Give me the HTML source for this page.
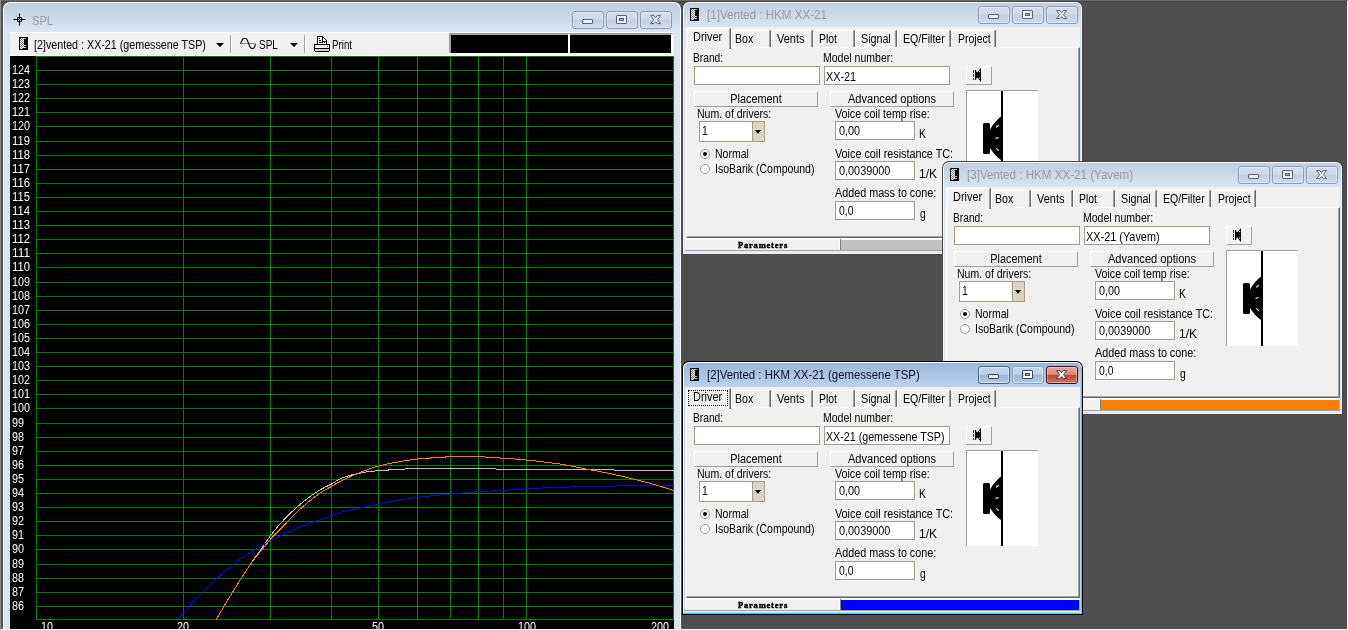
<!DOCTYPE html><html><head><meta charset="utf-8"><title>SPL</title><style>
html,body{margin:0;padding:0}
body{width:1348px;height:630px;background:#4f4f4f;overflow:hidden;position:relative;font-family:"Liberation Sans",sans-serif}
.t{position:absolute;white-space:nowrap;line-height:14px;transform-origin:0 0;display:block}
.t.c{text-align:center;transform-origin:50% 0}
.tt{position:absolute;white-space:nowrap;font-size:12.5px;line-height:14px;transform-origin:0 0;display:block}
.pm{position:absolute;font-family:"Liberation Serif","DejaVu Serif",serif;font-weight:bold;font-size:8.5px;line-height:11px;text-align:center;display:block;letter-spacing:.8px;-webkit-text-stroke:.45px #000}
svg text{font-family:"Liberation Sans",sans-serif}
</style></head><body><div style="position:absolute;left:0;top:0;width:1348px;height:630px;will-change:transform">
<div style="position:absolute;left:0px;top:0px;width:1348px;height:1px;background:#696969"></div>
<div style="position:absolute;left:0px;top:1px;width:1348px;height:1px;background:#474747"></div>
<div style="position:absolute;left:1346px;top:1px;width:1px;height:628px;background:#474747"></div>
<div style="position:absolute;left:0px;top:0px;width:1px;height:630px;background:#8c8c8c"></div>
<div style="position:absolute;left:2px;top:1px;width:680px;height:640px;background:#555;border-radius:8px 8px 0 0;overflow:hidden">
<div style="position:absolute;left:1px;top:1px;width:678px;height:640px;background:#fcfdfe;border-radius:7px 7px 0 0"></div>
<div style="position:absolute;left:2px;top:2px;width:676px;height:640px;background:linear-gradient(#c1cedd 0px,#d9e5f3 29px,#d9e5f3 100%);border-radius:6px 6px 0 0"></div>
<svg style="position:absolute;left:11px;top:12px" width="13" height="13" viewBox="0 0 13 13" shape-rendering="crispEdges"><rect x="6" y="0" width="1" height="13" fill="#000"/><rect x="0" y="6" width="13" height="1" fill="#000"/><rect x="5" y="4" width="3" height="5" fill="#000"/><rect x="4" y="5" width="5" height="3" fill="#000"/><rect x="4" y="4" width="1" height="1" fill="#5a5000"/><rect x="8" y="4" width="1" height="1" fill="#5a5000"/><rect x="4" y="8" width="1" height="1" fill="#5a5000"/><rect x="8" y="8" width="1" height="1" fill="#5a5000"/><rect x="5" y="5" width="1" height="1" fill="#fff"/><rect x="7" y="5" width="1" height="1" fill="#fff"/><rect x="5" y="7" width="1" height="1" fill="#fff"/><rect x="7" y="7" width="1" height="1" fill="#fff"/><rect x="6" y="6" width="1" height="1" fill="#c8b400"/><rect x="6" y="0" width="1" height="1" fill="#8a7a00"/><rect x="6" y="12" width="1" height="1" fill="#8a7a00"/><rect x="0" y="6" width="1" height="1" fill="#8a7a00"/><rect x="12" y="6" width="1" height="1" fill="#8a7a00"/></svg>
<span class="tt" style="left:29.5px;top:12.5px;color:#9a9aa6;transform:scaleX(0.89)">SPL</span>
<div style="position:absolute;left:570px;top:10px;width:30px;height:16px;border-radius:3px;border:1px solid #8e9cb6;background:linear-gradient(#d3deec 0%,#cdd9e9 46%,#c0cfe2 50%,#cfdcec 100%);box-shadow:inset 0 0 0 1px rgba(255,255,255,.35);"><div style="position:absolute;left:9px;top:7px;width:9px;height:3px;border:1px solid #5c6476;border-radius:1px;background:#f0f0f0"></div></div>
<div style="position:absolute;left:604px;top:10px;width:30px;height:16px;border-radius:3px;border:1px solid #8e9cb6;background:linear-gradient(#d3deec 0%,#cdd9e9 46%,#c0cfe2 50%,#cfdcec 100%);box-shadow:inset 0 0 0 1px rgba(255,255,255,.35);"><div style="position:absolute;left:9px;top:3px;width:9px;height:7px;border:1px solid #5c6476;border-radius:1px;background:#f0f0f0"><div style="position:absolute;left:2px;top:2px;width:3px;height:1px;border:1px solid #5c6476;background:#9ab5d4"></div></div></div>
<div style="position:absolute;left:638px;top:10px;width:30px;height:16px;border-radius:3px;border:1px solid #8e9cb6;background:linear-gradient(#d3deec 0%,#cdd9e9 46%,#c0cfe2 50%,#cfdcec 100%);box-shadow:inset 0 0 0 1px rgba(255,255,255,.35);"><svg style="position:absolute;left:9px;top:3px" width="12" height="10" viewBox="0 0 12 10"><path d="M0.6 0.6 L3.9 0.6 L5.6 2.7 L7.3 0.6 L10.6 0.6 L7.5 4.6 L10.6 8.6 L7.3 8.6 L5.6 6.5 L3.9 8.6 L0.6 8.6 L3.7 4.6 Z" fill="#f0f0f0" stroke="#5c6476" stroke-width="1" stroke-linejoin="round"/></svg></div>
<div style="position:absolute;left:8px;top:31px;width:664px;height:24px;background:#f0f0f0"></div>
<div style="position:absolute;left:17px;top:36px;width:9px;height:13px;background:#000"><div style="position:absolute;left:1px;top:1px;width:4px;height:11px;background:repeating-conic-gradient(#fff 0 25%,#808080 0 50%) 0 0/2px 2px"></div><div style="position:absolute;left:5px;top:1px;width:2px;height:1px;background:#b0b0b0"></div><div style="position:absolute;left:5px;top:8px;width:2px;height:1px;background:#c8c8c8"></div><div style="position:absolute;left:4px;top:10px;width:3px;height:1px;background:#c8c8c8"></div><div style="position:absolute;left:4px;top:11px;width:1px;height:1px;background:#000"></div></div>
<span class="t" style="left:32.27px;top:37.4px;font-size:12.5px;transform:scaleX(0.857);color:#000;">[2]vented : XX-21 (gemessene TSP)</span>
<div style="position:absolute;left:214px;top:42px;width:0;height:0;border-left:4px solid transparent;border-right:4px solid transparent;border-top:4px solid #000"></div>
<div style="position:absolute;left:228px;top:34px;width:1px;height:18px;background:#a0a0a0"></div>
<div style="position:absolute;left:229px;top:34px;width:1px;height:18px;background:#fff"></div>
<svg style="position:absolute;left:236px;top:33px" width="22" height="20" viewBox="238 34 22 20"><path d="M241 43.5H256" stroke="#909090" stroke-width="1" fill="none"/><path d="M240.5 43.8 L242.5 39.5 L243.6 38.5 L246.2 38.5 L247.4 40.2 L248.6 43.5 L249.6 46 L250.6 47.8 L251.6 48.5 L253.3 48.5 L254.4 47.4 L255.5 44.2" stroke="#000" stroke-width="1.1" fill="none" stroke-linejoin="round"/></svg>
<span class="t" style="left:256.55px;top:37.4px;font-size:12.5px;transform:scaleX(0.8);color:#000;">SPL</span>
<div style="position:absolute;left:288px;top:42px;width:0;height:0;border-left:4px solid transparent;border-right:4px solid transparent;border-top:4px solid #000"></div>
<div style="position:absolute;left:302px;top:34px;width:1px;height:18px;background:#a0a0a0"></div>
<div style="position:absolute;left:303px;top:34px;width:1px;height:18px;background:#fff"></div>
<svg style="position:absolute;left:310px;top:33px" width="20" height="20" viewBox="312 34 20 20" shape-rendering="crispEdges"><path d="M317.5 44.5V36.5H322.5L326.5 40.5V44.5" fill="#fff" stroke="#000"/><path d="M322 37V41H326" fill="none" stroke="#000"/><path d="M319 38.5H320M319 40.5H321M319 42.5H323M324 42.5H325" stroke="#000"/><rect x="314.5" y="44.5" width="15" height="4" fill="#f4f4f4" stroke="#000"/><rect x="314.5" y="48.5" width="15" height="3" fill="#d4d4d4" stroke="#000"/><rect x="314" y="51" width="1" height="1" fill="#f0f0f0"/><rect x="329" y="51" width="1" height="1" fill="#f0f0f0"/><rect x="326.5" y="45.8" width="1.6" height="1.6" fill="#f00"/></svg>
<span class="t" style="left:330.25px;top:37.4px;font-size:12.5px;transform:scaleX(0.78);color:#000;">Print</span>
<div style="position:absolute;left:447px;top:32px;width:224px;height:2px;background:#a0a0a0"></div>
<div style="position:absolute;left:447px;top:32px;width:2px;height:20px;background:#a0a0a0"></div>
<div style="position:absolute;left:447px;top:52px;width:224px;height:2px;background:#fff"></div>
<div style="position:absolute;left:449px;top:34px;width:117px;height:18px;background:#000"></div>
<div style="position:absolute;left:566px;top:33px;width:2px;height:19px;background:#fff"></div>
<div style="position:absolute;left:568px;top:34px;width:101px;height:18px;background:#000"></div>
<div style="position:absolute;left:669px;top:33px;width:2px;height:19px;background:#fff"></div>
<div style="position:absolute;left:8px;top:31px;width:664px;height:1px;background:#fff"></div>
<div style="position:absolute;left:8px;top:54px;width:664px;height:1px;background:#fff"></div>
<svg style="position:absolute;left:8px;top:55px" width="664" height="580" viewBox="10 56 664 580" shape-rendering="crispEdges">
<rect x="10" y="56" width="664" height="580" fill="#000"/>
<path d="M36 619.5H674 M36 606.5H674 M36 592.5H674 M36 578.5H674 M36 564.5H674 M36 549.5H674 M36 535.5H674 M36 521.5H674 M36 507.5H674 M36 493.5H674 M36 479.5H674 M36 465.5H674 M36 451.5H674 M36 437.5H674 M36 423.5H674 M36 408.5H674 M36 394.5H674 M36 380.5H674 M36 366.5H674 M36 352.5H674 M36 338.5H674 M36 324.5H674 M36 310.5H674 M36 296.5H674 M36 282.5H674 M36 267.5H674 M36 253.5H674 M36 239.5H674 M36 225.5H674 M36 211.5H674 M36 197.5H674 M36 183.5H674 M36 169.5H674 M36 155.5H674 M36 141.5H674 M36 126.5H674 M36 112.5H674 M36 98.5H674 M36 84.5H674 M36 70.5H674 M36 56.5H674 M36.5 56V620 M183.5 56V620 M270.5 56V620 M331.5 56V620 M378.5 56V620 M417.5 56V620 M450.5 56V620 M478.5 56V620 M503.5 56V620 M526.5 56V620 M673.5 56V620" stroke="#008000" stroke-width="1" fill="none"/>
<text x="12" y="610" fill="#fff" font-size="12.5" textLength="12" lengthAdjust="spacingAndGlyphs">86</text>
<text x="12" y="596" fill="#fff" font-size="12.5" textLength="12" lengthAdjust="spacingAndGlyphs">87</text>
<text x="12" y="582" fill="#fff" font-size="12.5" textLength="12" lengthAdjust="spacingAndGlyphs">88</text>
<text x="12" y="568" fill="#fff" font-size="12.5" textLength="12" lengthAdjust="spacingAndGlyphs">89</text>
<text x="12" y="553" fill="#fff" font-size="12.5" textLength="12" lengthAdjust="spacingAndGlyphs">90</text>
<text x="12" y="539" fill="#fff" font-size="12.5" textLength="12" lengthAdjust="spacingAndGlyphs">91</text>
<text x="12" y="525" fill="#fff" font-size="12.5" textLength="12" lengthAdjust="spacingAndGlyphs">92</text>
<text x="12" y="511" fill="#fff" font-size="12.5" textLength="12" lengthAdjust="spacingAndGlyphs">93</text>
<text x="12" y="497" fill="#fff" font-size="12.5" textLength="12" lengthAdjust="spacingAndGlyphs">94</text>
<text x="12" y="483" fill="#fff" font-size="12.5" textLength="12" lengthAdjust="spacingAndGlyphs">95</text>
<text x="12" y="469" fill="#fff" font-size="12.5" textLength="12" lengthAdjust="spacingAndGlyphs">96</text>
<text x="12" y="455" fill="#fff" font-size="12.5" textLength="12" lengthAdjust="spacingAndGlyphs">97</text>
<text x="12" y="441" fill="#fff" font-size="12.5" textLength="12" lengthAdjust="spacingAndGlyphs">98</text>
<text x="12" y="427" fill="#fff" font-size="12.5" textLength="12" lengthAdjust="spacingAndGlyphs">99</text>
<text x="12" y="412" fill="#fff" font-size="12.5" textLength="18" lengthAdjust="spacingAndGlyphs">100</text>
<text x="12" y="398" fill="#fff" font-size="12.5" textLength="18" lengthAdjust="spacingAndGlyphs">101</text>
<text x="12" y="384" fill="#fff" font-size="12.5" textLength="18" lengthAdjust="spacingAndGlyphs">102</text>
<text x="12" y="370" fill="#fff" font-size="12.5" textLength="18" lengthAdjust="spacingAndGlyphs">103</text>
<text x="12" y="356" fill="#fff" font-size="12.5" textLength="18" lengthAdjust="spacingAndGlyphs">104</text>
<text x="12" y="342" fill="#fff" font-size="12.5" textLength="18" lengthAdjust="spacingAndGlyphs">105</text>
<text x="12" y="328" fill="#fff" font-size="12.5" textLength="18" lengthAdjust="spacingAndGlyphs">106</text>
<text x="12" y="314" fill="#fff" font-size="12.5" textLength="18" lengthAdjust="spacingAndGlyphs">107</text>
<text x="12" y="300" fill="#fff" font-size="12.5" textLength="18" lengthAdjust="spacingAndGlyphs">108</text>
<text x="12" y="286" fill="#fff" font-size="12.5" textLength="18" lengthAdjust="spacingAndGlyphs">109</text>
<text x="12" y="271" fill="#fff" font-size="12.5" textLength="18" lengthAdjust="spacingAndGlyphs">110</text>
<text x="12" y="257" fill="#fff" font-size="12.5" textLength="18" lengthAdjust="spacingAndGlyphs">111</text>
<text x="12" y="243" fill="#fff" font-size="12.5" textLength="18" lengthAdjust="spacingAndGlyphs">112</text>
<text x="12" y="229" fill="#fff" font-size="12.5" textLength="18" lengthAdjust="spacingAndGlyphs">113</text>
<text x="12" y="215" fill="#fff" font-size="12.5" textLength="18" lengthAdjust="spacingAndGlyphs">114</text>
<text x="12" y="201" fill="#fff" font-size="12.5" textLength="18" lengthAdjust="spacingAndGlyphs">115</text>
<text x="12" y="187" fill="#fff" font-size="12.5" textLength="18" lengthAdjust="spacingAndGlyphs">116</text>
<text x="12" y="173" fill="#fff" font-size="12.5" textLength="18" lengthAdjust="spacingAndGlyphs">117</text>
<text x="12" y="159" fill="#fff" font-size="12.5" textLength="18" lengthAdjust="spacingAndGlyphs">118</text>
<text x="12" y="145" fill="#fff" font-size="12.5" textLength="18" lengthAdjust="spacingAndGlyphs">119</text>
<text x="12" y="130" fill="#fff" font-size="12.5" textLength="18" lengthAdjust="spacingAndGlyphs">120</text>
<text x="12" y="116" fill="#fff" font-size="12.5" textLength="18" lengthAdjust="spacingAndGlyphs">121</text>
<text x="12" y="102" fill="#fff" font-size="12.5" textLength="18" lengthAdjust="spacingAndGlyphs">122</text>
<text x="12" y="88" fill="#fff" font-size="12.5" textLength="18" lengthAdjust="spacingAndGlyphs">123</text>
<text x="12" y="74" fill="#fff" font-size="12.5" textLength="18" lengthAdjust="spacingAndGlyphs">124</text>
<text x="41.0" y="631" fill="#fff" font-size="12.5" textLength="12" lengthAdjust="spacingAndGlyphs">10</text>
<text x="177.0" y="631" fill="#fff" font-size="12.5" textLength="12" lengthAdjust="spacingAndGlyphs">20</text>
<text x="372.0" y="631" fill="#fff" font-size="12.5" textLength="12" lengthAdjust="spacingAndGlyphs">50</text>
<text x="518.0" y="631" fill="#fff" font-size="12.5" textLength="18" lengthAdjust="spacingAndGlyphs">100</text>
<text x="651.0" y="631" fill="#fff" font-size="12.5" textLength="18" lengthAdjust="spacingAndGlyphs">200</text>
<path d="M216.1 619.7 L219.1 614.6 L222.1 609.5 L225.1 604.5 L228.1 599.5 L231.1 594.6 L234.1 589.7 L237.1 584.9 L240.1 580.1 L243.1 575.4 L246.1 570.7 L249.1 566.1 L252.1 561.6 L255.1 557.4 L258.1 553.4 L261.1 549.3 L264.1 545.0 L267.1 540.5 L270.1 536.2 L273.1 532.3 L276.1 528.6 L279.1 525.0 L282.1 521.7 L285.1 518.5 L288.1 515.4 L291.1 512.5 L294.1 509.8 L297.1 507.1 L300.1 504.4 L303.1 501.9 L306.1 499.5 L309.1 497.3 L312.1 495.1 L315.1 493.1 L318.1 491.1 L321.1 489.3 L324.1 487.6 L327.1 486.2 L330.1 484.7 L333.1 483.1 L336.1 481.1 L339.1 479.3 L342.1 478.0 L345.1 476.9 L348.1 476.0 L351.1 475.1 L354.1 474.3 L357.1 473.7 L360.1 473.1 L363.1 472.5 L366.1 472.0 L369.1 471.6 L372.1 471.3 L375.1 471.0 L378.1 470.7 L381.1 470.4 L384.1 470.2 L387.1 470.1 L390.1 469.9 L393.1 469.8 L396.1 469.7 L399.1 469.5 L402.1 469.2 L405.1 469.0 L408.1 468.8 L411.1 468.8 L414.1 468.8 L417.1 468.8 L420.1 468.8 L423.1 468.8 L426.1 468.8 L429.1 468.8 L432.1 468.8 L435.1 468.8 L438.1 468.8 L441.1 468.8 L444.1 468.8 L447.1 468.8 L450.1 468.8 L453.1 468.8 L456.1 468.8 L459.1 468.8 L462.1 468.8 L465.1 468.8 L468.1 468.8 L471.1 468.8 L474.1 468.8 L477.1 468.8 L480.1 468.8 L483.1 468.8 L486.1 468.8 L489.1 468.8 L492.1 468.8 L495.1 468.8 L498.1 469.6 L501.1 469.6 L504.1 469.6 L507.1 469.6 L510.1 469.6 L513.1 469.6 L516.1 469.6 L519.1 469.6 L522.1 469.6 L525.1 469.6 L528.1 469.6 L531.1 469.6 L534.1 469.6 L537.1 469.6 L540.1 469.6 L543.1 469.6 L546.1 469.6 L549.1 469.6 L552.1 469.6 L555.1 469.6 L558.1 469.6 L561.1 469.6 L564.1 469.6 L567.1 469.6 L570.1 469.6 L573.1 469.6 L576.1 469.6 L579.1 469.6 L582.1 469.6 L585.1 469.6 L588.1 469.6 L591.1 469.6 L594.1 469.6 L597.1 469.6 L600.1 469.6 L603.1 469.6 L606.1 469.6 L609.1 469.6 L612.1 469.6 L615.1 470.4 L618.1 470.4 L621.1 470.4 L624.1 470.4 L627.1 470.4 L630.1 470.4 L633.1 470.4 L636.1 470.4 L639.1 470.4 L642.1 470.4 L645.1 470.4 L648.1 470.4 L651.1 470.4 L654.1 470.4 L657.1 470.4 L660.1 470.4 L663.1 470.4 L666.1 470.4 L669.1 470.4 L672.1 470.4 L673.6 470.4" stroke="#c0c0c0" stroke-width="1" fill="none"/>
<path d="M177.3 619.7 L180.3 616.3 L183.3 612.9 L186.3 609.6 L189.3 606.4 L192.3 603.2 L195.3 600.0 L198.3 596.8 L201.3 593.7 L204.3 590.7 L207.3 587.6 L210.3 584.6 L213.3 581.7 L216.3 578.9 L219.3 576.1 L222.3 573.5 L225.3 570.8 L228.3 568.3 L231.3 565.8 L234.3 563.4 L237.3 561.1 L240.3 559.0 L243.3 557.0 L246.3 555.0 L249.3 553.1 L252.3 551.2 L255.3 549.4 L258.3 547.6 L261.3 545.9 L264.3 544.2 L267.3 542.5 L270.3 540.9 L273.3 539.4 L276.3 537.8 L279.3 536.3 L282.3 534.9 L285.3 533.5 L288.3 532.1 L291.3 530.7 L294.3 529.4 L297.3 528.1 L300.3 526.8 L303.3 525.5 L306.3 524.4 L309.3 523.2 L312.3 522.1 L315.3 521.1 L318.3 520.1 L321.3 519.1 L324.3 518.1 L327.3 517.1 L330.3 516.1 L333.3 515.0 L336.3 513.9 L339.3 512.8 L342.3 512.0 L345.3 511.2 L348.3 510.6 L351.3 509.9 L354.3 509.3 L357.3 508.6 L360.3 508.0 L363.3 507.4 L366.3 506.8 L369.3 506.2 L372.3 505.5 L375.3 504.9 L378.3 504.3 L381.3 503.6 L384.3 503.0 L387.3 502.3 L390.3 501.6 L393.3 501.0 L396.3 500.4 L399.3 499.9 L402.3 499.5 L405.3 499.0 L408.3 498.6 L411.3 498.2 L414.3 497.8 L417.3 497.4 L420.3 497.1 L423.3 496.7 L426.3 496.4 L429.3 496.1 L432.3 495.8 L435.3 495.5 L438.3 495.2 L441.3 494.9 L444.3 494.6 L447.3 494.4 L450.3 494.1 L453.3 493.9 L456.3 493.6 L459.3 493.3 L462.3 493.0 L465.3 492.8 L468.3 492.5 L471.3 492.2 L474.3 492.0 L477.3 491.8 L480.3 491.6 L483.3 491.4 L486.3 491.2 L489.3 491.1 L492.3 490.9 L495.3 490.8 L498.3 490.6 L501.3 490.4 L504.3 490.3 L507.3 490.1 L510.3 489.9 L513.3 489.7 L516.3 489.5 L519.3 489.3 L522.3 489.1 L525.3 488.9 L528.3 488.7 L531.3 488.5 L534.3 488.4 L537.3 488.2 L540.3 488.1 L543.3 487.9 L546.3 487.8 L549.3 487.7 L552.3 487.6 L555.3 487.5 L558.3 487.4 L561.3 487.3 L564.3 487.2 L567.3 487.1 L570.3 487.0 L573.3 486.9 L576.3 486.8 L579.3 486.7 L582.3 486.7 L585.3 486.6 L588.3 486.5 L591.3 486.5 L594.3 486.4 L597.3 486.3 L600.3 486.3 L603.3 486.2 L606.3 486.1 L609.3 486.1 L612.3 486.0 L615.3 486.0 L618.3 485.9 L621.3 485.9 L624.3 485.8 L627.3 485.8 L630.3 485.7 L633.3 485.7 L636.3 485.6 L639.3 485.6 L642.3 485.6 L645.3 485.6 L648.3 485.5 L651.3 485.5 L654.3 485.5 L657.3 485.5 L660.3 485.4 L663.3 485.4 L666.3 485.4 L669.3 485.4 L672.3 485.4 L673.6 485.4" stroke="#0000ff" stroke-width="1" fill="none"/>
<path d="M216.1 619.7 L219.1 614.6 L222.1 609.5 L225.1 604.5 L228.1 599.5 L231.1 594.6 L234.1 589.7 L237.1 584.9 L240.1 580.1 L243.1 575.4 L246.1 570.7 L249.1 566.2 L252.1 561.9 L255.1 558.0 L258.1 554.3 L261.1 550.7 L264.1 547.1 L267.1 543.3 L270.1 539.7 L273.1 536.4 L276.1 533.4 L279.1 530.5 L282.1 527.5 L285.1 524.3 L288.1 521.1 L291.1 517.9 L294.1 514.9 L297.1 512.0 L300.1 509.2 L303.1 506.4 L306.1 503.8 L309.1 501.3 L312.1 498.9 L315.1 496.7 L318.1 494.5 L321.1 492.4 L324.1 490.5 L327.1 488.8 L330.1 487.2 L333.1 485.5 L336.1 483.6 L339.1 481.9 L342.1 480.4 L345.1 478.9 L348.1 477.6 L351.1 476.3 L354.1 475.1 L357.1 473.8 L360.1 472.6 L363.1 471.4 L366.1 470.2 L369.1 469.1 L372.1 468.1 L375.1 467.0 L378.1 466.2 L381.1 465.4 L384.1 464.7 L387.1 464.0 L390.1 463.4 L393.1 462.8 L396.1 462.3 L399.1 461.7 L402.1 461.2 L405.1 460.7 L408.1 460.2 L411.1 459.8 L414.1 459.4 L417.1 459.0 L420.1 458.8 L423.1 458.5 L426.1 458.3 L429.1 458.1 L432.1 457.9 L435.1 457.7 L438.1 457.5 L441.1 457.3 L444.1 457.1 L447.1 456.9 L450.1 456.7 L453.1 456.5 L456.1 456.5 L459.1 456.5 L462.1 456.5 L465.1 456.5 L468.1 456.5 L471.1 456.5 L474.1 456.5 L477.1 456.5 L480.1 456.7 L483.1 456.9 L486.1 457.1 L489.1 457.3 L492.1 457.5 L495.1 457.7 L498.1 457.9 L501.1 458.1 L504.1 458.3 L507.1 458.5 L510.1 458.7 L513.1 458.9 L516.1 459.1 L519.1 459.4 L522.1 459.6 L525.1 459.9 L528.1 460.2 L531.1 460.5 L534.1 460.8 L537.1 461.2 L540.1 461.6 L543.1 461.9 L546.1 462.3 L549.1 462.6 L552.1 463.0 L555.1 463.3 L558.1 463.7 L561.1 464.2 L564.1 464.7 L567.1 465.3 L570.1 465.9 L573.1 466.4 L576.1 467.0 L579.1 467.7 L582.1 468.3 L585.1 468.9 L588.1 469.5 L591.1 470.0 L594.1 470.6 L597.1 471.1 L600.1 471.7 L603.1 472.3 L606.1 472.9 L609.1 473.5 L612.1 474.1 L615.1 474.8 L618.1 475.4 L621.1 476.1 L624.1 476.8 L627.1 477.5 L630.1 478.3 L633.1 479.0 L636.1 479.7 L639.1 480.4 L642.1 481.2 L645.1 482.0 L648.1 482.8 L651.1 483.7 L654.1 484.5 L657.1 485.4 L660.1 486.3 L663.1 487.2 L666.1 488.1 L669.1 489.0 L672.1 489.9 L673.6 490.4" stroke="#ff8000" stroke-width="1" fill="none"/>
</svg>
</div>
<div style="position:absolute;left:682px;top:1px;width:401px;height:254px;background:#484848;border-radius:7px 7px 0 0;overflow:hidden">
<div style="position:absolute;left:1px;top:1px;width:399px;height:252px;background:#f2f6fb;border-radius:6px 6px 0 0;overflow:hidden">
<div style="position:absolute;left:1px;top:1px;width:397px;height:250px;background:linear-gradient(#c1cedd 0px,#d9e5f3 24px,#d9e5f3 100%);border-radius:5px 5px 0 0"></div>
</div>
<div style="position:absolute;left:3px;top:26px;width:395px;height:225px;background:#f0f0f0"></div>
<div style="position:absolute;left:8px;top:7px;width:9px;height:13px;background:#000"><div style="position:absolute;left:1px;top:1px;width:4px;height:11px;background:repeating-conic-gradient(#fff 0 25%,#808080 0 50%) 0 0/2px 2px"></div><div style="position:absolute;left:5px;top:1px;width:2px;height:1px;background:#b0b0b0"></div><div style="position:absolute;left:5px;top:8px;width:2px;height:1px;background:#c8c8c8"></div><div style="position:absolute;left:4px;top:10px;width:3px;height:1px;background:#c8c8c8"></div><div style="position:absolute;left:4px;top:11px;width:1px;height:1px;background:#000"></div></div>
<span class="tt" style="left:25px;top:7.3px;color:#9a9aa6;transform:scaleX(0.928)">[1]Vented : HKM XX-21</span>
<div style="position:absolute;left:296px;top:5px;width:30px;height:16px;border-radius:3px;border:1px solid #8e9cb6;background:linear-gradient(#d3deec 0%,#cdd9e9 46%,#c0cfe2 50%,#cfdcec 100%);box-shadow:inset 0 0 0 1px rgba(255,255,255,.35);"><div style="position:absolute;left:9px;top:7px;width:9px;height:3px;border:1px solid #5c6476;border-radius:1px;background:#f0f0f0"></div></div>
<div style="position:absolute;left:330px;top:5px;width:30px;height:16px;border-radius:3px;border:1px solid #8e9cb6;background:linear-gradient(#d3deec 0%,#cdd9e9 46%,#c0cfe2 50%,#cfdcec 100%);box-shadow:inset 0 0 0 1px rgba(255,255,255,.35);"><div style="position:absolute;left:9px;top:3px;width:9px;height:7px;border:1px solid #5c6476;border-radius:1px;background:#f0f0f0"><div style="position:absolute;left:2px;top:2px;width:3px;height:1px;border:1px solid #5c6476;background:#9ab5d4"></div></div></div>
<div style="position:absolute;left:364px;top:5px;width:30px;height:16px;border-radius:3px;border:1px solid #8e9cb6;background:linear-gradient(#d3deec 0%,#cdd9e9 46%,#c0cfe2 50%,#cfdcec 100%);box-shadow:inset 0 0 0 1px rgba(255,255,255,.35);"><svg style="position:absolute;left:9px;top:3px" width="12" height="10" viewBox="0 0 12 10"><path d="M0.6 0.6 L3.9 0.6 L5.6 2.7 L7.3 0.6 L10.6 0.6 L7.5 4.6 L10.6 8.6 L7.3 8.6 L5.6 6.5 L3.9 8.6 L0.6 8.6 L3.7 4.6 Z" fill="#f0f0f0" stroke="#5c6476" stroke-width="1" stroke-linejoin="round"/></svg></div>
<div style="position:absolute;left:4px;top:46px;width:394px;height:191px;box-sizing:border-box;border-top:1px solid #fff;border-left:1px solid #fff;border-right:1px solid #696969;border-bottom:1px solid #696969;"></div>
<div style="position:absolute;left:5px;top:47px;width:392px;height:189px;box-sizing:border-box;border-right:1px solid #a0a0a0;border-bottom:1px solid #a0a0a0;"></div>
<div style="position:absolute;left:5px;top:27px;width:44px;height:21px;box-sizing:border-box;background:#f0f0f0;border-top:1px solid #fff;border-left:1px solid #fff;border-right:2px solid #696969;"></div>
<div style="position:absolute;left:47px;top:28px;width:1px;height:20px;background:#a0a0a0"></div>
<span class="t" style="left:11.16px;top:29.4px;font-size:12.5px;transform:scaleX(0.874);color:#000;">Driver</span>
<div style="position:absolute;left:49px;top:29px;width:40px;height:17px;box-sizing:border-box;border-top:1px solid #fff;border-left:1px solid #fff;border-right:2px solid #696969;"></div>
<div style="position:absolute;left:87px;top:30px;width:1px;height:16px;background:#a0a0a0"></div>
<span class="t" style="left:53.23px;top:31.4px;font-size:12.5px;transform:scaleX(0.85);color:#000;">Box</span>
<div style="position:absolute;left:89px;top:29px;width:42px;height:17px;box-sizing:border-box;border-top:1px solid #fff;border-left:1px solid #fff;border-right:2px solid #696969;"></div>
<div style="position:absolute;left:129px;top:30px;width:1px;height:16px;background:#a0a0a0"></div>
<span class="t" style="left:94.96px;top:31.4px;font-size:12.5px;transform:scaleX(0.877);color:#000;">Vents</span>
<div style="position:absolute;left:131px;top:29px;width:42px;height:17px;box-sizing:border-box;border-top:1px solid #fff;border-left:1px solid #fff;border-right:2px solid #696969;"></div>
<div style="position:absolute;left:171px;top:30px;width:1px;height:16px;background:#a0a0a0"></div>
<span class="t" style="left:137.2px;top:31.4px;font-size:12.5px;transform:scaleX(0.836);color:#000;">Plot</span>
<div style="position:absolute;left:173px;top:29px;width:42px;height:17px;box-sizing:border-box;border-top:1px solid #fff;border-left:1px solid #fff;border-right:2px solid #696969;"></div>
<div style="position:absolute;left:213px;top:30px;width:1px;height:16px;background:#a0a0a0"></div>
<span class="t" style="left:178.52px;top:31.4px;font-size:12.5px;transform:scaleX(0.856);color:#000;">Signal</span>
<div style="position:absolute;left:215px;top:29px;width:54px;height:17px;box-sizing:border-box;border-top:1px solid #fff;border-left:1px solid #fff;border-right:2px solid #696969;"></div>
<div style="position:absolute;left:267px;top:30px;width:1px;height:16px;background:#a0a0a0"></div>
<span class="t" style="left:221.46px;top:31.4px;font-size:12.5px;transform:scaleX(0.847);color:#000;">EQ/Filter</span>
<div style="position:absolute;left:269px;top:29px;width:45px;height:17px;box-sizing:border-box;border-top:1px solid #fff;border-left:1px solid #fff;border-right:2px solid #696969;"></div>
<div style="position:absolute;left:312px;top:30px;width:1px;height:16px;background:#a0a0a0"></div>
<span class="t" style="left:275.69px;top:31.4px;font-size:12.5px;transform:scaleX(0.839);color:#000;">Project</span>
<span class="t" style="left:11.26px;top:50.4px;font-size:12.5px;transform:scaleX(0.817);color:#000;">Brand:</span>
<span class="t" style="left:141.23px;top:50.4px;font-size:12.5px;transform:scaleX(0.842);color:#000;">Model number:</span>
<div style="position:absolute;left:12px;top:65px;width:126px;height:19px;box-sizing:border-box;border:1px solid #a59c86;background:#fff;"></div>
<div style="position:absolute;left:142px;top:65px;width:126px;height:19px;box-sizing:border-box;border:1px solid #a59c86;background:#fff;"></div>
<span class="t" style="left:144.46px;top:69.4px;font-size:12.5px;transform:scaleX(0.868);color:#000;">XX-21</span>
<div style="position:absolute;left:284px;top:65px;width:26px;height:19px;box-sizing:border-box;background:#f0f0f0;border-top:1px solid #fff;border-left:1px solid #fff;border-right:1px solid #a0a0a0;border-bottom:1px solid #a0a0a0;"></div>
<svg style="position:absolute;left:291px;top:67px" width="9" height="14" viewBox="0 0 9 14"><path d="M0.5 2V12" stroke="#333" stroke-width="1" stroke-dasharray="3 1"/><rect x="2" y="2" width="1.2" height="10" fill="#000"/><path d="M3 3.6 L4.2 4.4 L8 0 L8 14 L4.2 9.6 L3 10.4 Z" fill="#000"/><rect x="6" y="3" width="1.2" height="1.2" fill="#ccc"/><rect x="6" y="9.6" width="1.2" height="1.2" fill="#ccc"/></svg>
<div style="position:absolute;left:12px;top:90px;width:124px;height:16px;box-sizing:border-box;background:#f0f0f0;border-top:1px solid #fff;border-left:1px solid #fff;border-right:1px solid #a0a0a0;border-bottom:1px solid #a0a0a0;"></div>
<span class="t c" style="left:-76px;width:300px;top:91.4px;font-size:12.5px;transform:scaleX(0.87);color:#000;">Placement</span>
<div style="position:absolute;left:148px;top:90px;width:124px;height:16px;box-sizing:border-box;background:#f0f0f0;border-top:1px solid #fff;border-left:1px solid #fff;border-right:1px solid #a0a0a0;border-bottom:1px solid #a0a0a0;"></div>
<span class="t c" style="left:60px;width:300px;top:91.4px;font-size:12.5px;transform:scaleX(0.887);color:#000;">Advanced options</span>
<span class="t" style="left:15.2px;top:106.4px;font-size:12.5px;transform:scaleX(0.841);color:#000;">Num. of drivers:</span>
<span class="t" style="left:152.96px;top:106.4px;font-size:12.5px;transform:scaleX(0.853);color:#000;">Voice coil temp rise:</span>
<div style="position:absolute;left:17px;top:120px;width:66px;height:21px;box-sizing:border-box;border:1px solid #a59c86;background:#fff;"></div>
<div style="position:absolute;left:70px;top:121px;width:12px;height:19px;background:#d9d5c0;border-left:1px solid #a59c86;box-sizing:border-box"></div>
<div style="position:absolute;left:73px;top:129px;width:0;height:0;border-left:3.5px solid transparent;border-right:3.5px solid transparent;border-top:4px solid #000"></div>
<span class="t" style="left:19.87px;top:123.4px;font-size:12.5px;transform:scaleX(0.83);color:#000;">1</span>
<div style="position:absolute;left:153px;top:120px;width:80px;height:19px;box-sizing:border-box;border:1px solid #a59c86;background:#fff;"></div>
<span class="t" style="left:156.55px;top:123.4px;font-size:12.5px;transform:scaleX(0.865);color:#000;">0,00</span>
<span class="t" style="left:237.24px;top:126.4px;font-size:12.5px;transform:scaleX(0.83);color:#000;">K</span>
<span class="t" style="left:152.96px;top:146.4px;font-size:12.5px;transform:scaleX(0.864);color:#000;">Voice coil resistance TC:</span>
<div style="position:absolute;left:153px;top:160px;width:80px;height:19px;box-sizing:border-box;border:1px solid #a59c86;background:#fff;"></div>
<span class="t" style="left:156.55px;top:163.4px;font-size:12.5px;transform:scaleX(0.869);color:#000;">0,0039000</span>
<span class="t" style="left:236.69px;top:166.4px;font-size:12.5px;transform:scaleX(0.966);color:#000;">1/K</span>
<span class="t" style="left:153.0px;top:185.4px;font-size:12.5px;transform:scaleX(0.862);color:#000;">Added mass to cone:</span>
<div style="position:absolute;left:153px;top:200px;width:80px;height:19px;box-sizing:border-box;border:1px solid #a59c86;background:#fff;"></div>
<span class="t" style="left:156.57px;top:203.4px;font-size:12.5px;transform:scaleX(0.83);color:#000;">0,0</span>
<span class="t" style="left:237.67px;top:206.4px;font-size:12.5px;transform:scaleX(0.83);color:#000;">g</span>
<div style="position:absolute;left:18px;top:148px;width:10px;height:10px;box-sizing:border-box;border:1px solid #a09884;border-radius:50%;background:#fff"></div>
<div style="position:absolute;left:21px;top:151px;width:4px;height:4px;border-radius:50%;background:#000"></div>
<span class="t" style="left:33.2px;top:146.4px;font-size:12.5px;transform:scaleX(0.84);color:#000;">Normal</span>
<div style="position:absolute;left:18px;top:163px;width:10px;height:10px;box-sizing:border-box;border:1px solid #a09884;border-radius:50%;background:#fff"></div>
<span class="t" style="left:33.02px;top:161.4px;font-size:12.5px;transform:scaleX(0.842);color:#000;">IsoBarik (Compound)</span>
<div style="position:absolute;left:284px;top:89px;width:72px;height:96px;background:#fff;box-sizing:border-box;border-top:1px solid #a0a0a0;border-left:1px solid #a0a0a0"></div>
<div style="position:absolute;left:319px;top:90px;width:2px;height:95px;background:#000"></div>
<svg style="position:absolute;left:300px;top:113px" width="20" height="48" viewBox="0 0 20 48"><path d="M2.5 9 H6.5 Q8 9 8 10.5 V15.5 Q13 7 19 2.5 V46 Q13 42 8 34 V38.5 Q8 40 6.5 40 H2.5 Q1 40 1 38.5 V10.5 Q1 9 2.5 9 Z" fill="#000"/><path d="M14.6 13 L16.4 11.4 M14 24.3 L16 23.7 M14.6 34.6 L16.4 36.4" stroke="#ddd" stroke-width="1.3" stroke-linecap="round"/></svg>
<div style="position:absolute;left:3px;top:237px;width:395px;height:2px;background:#fff"></div>
<div style="position:absolute;left:3px;top:239px;width:1px;height:10px;background:#fff"></div>
<div style="position:absolute;left:157px;top:239px;width:1px;height:10px;background:#fff"></div>
<div style="position:absolute;left:158px;top:238px;width:1px;height:11px;background:#808080"></div>
<div style="position:absolute;left:159px;top:239px;width:238px;height:10px;background:#c0c0c0"></div>
<div style="position:absolute;left:397px;top:239px;width:1px;height:10px;background:#b4b4b4"></div>
<div style="position:absolute;left:3px;top:249px;width:395px;height:1px;background:#a0a0a0"></div>
<span class="pm" style="left:3px;top:239px;width:156px">Parameters</span>
</div>
<div style="position:absolute;left:942px;top:161px;width:401px;height:254px;background:#484848;border-radius:7px 7px 0 0;overflow:hidden">
<div style="position:absolute;left:1px;top:1px;width:399px;height:252px;background:#f2f6fb;border-radius:6px 6px 0 0;overflow:hidden">
<div style="position:absolute;left:1px;top:1px;width:397px;height:250px;background:linear-gradient(#c1cedd 0px,#d9e5f3 24px,#d9e5f3 100%);border-radius:5px 5px 0 0"></div>
</div>
<div style="position:absolute;left:3px;top:26px;width:395px;height:225px;background:#f0f0f0"></div>
<div style="position:absolute;left:8px;top:7px;width:9px;height:13px;background:#000"><div style="position:absolute;left:1px;top:1px;width:4px;height:11px;background:repeating-conic-gradient(#fff 0 25%,#808080 0 50%) 0 0/2px 2px"></div><div style="position:absolute;left:5px;top:1px;width:2px;height:1px;background:#b0b0b0"></div><div style="position:absolute;left:5px;top:8px;width:2px;height:1px;background:#c8c8c8"></div><div style="position:absolute;left:4px;top:10px;width:3px;height:1px;background:#c8c8c8"></div><div style="position:absolute;left:4px;top:11px;width:1px;height:1px;background:#000"></div></div>
<span class="tt" style="left:25px;top:7.3px;color:#9a9aa6;transform:scaleX(0.928)">[3]Vented : HKM XX-21 (Yavem)</span>
<div style="position:absolute;left:296px;top:5px;width:30px;height:16px;border-radius:3px;border:1px solid #8e9cb6;background:linear-gradient(#d3deec 0%,#cdd9e9 46%,#c0cfe2 50%,#cfdcec 100%);box-shadow:inset 0 0 0 1px rgba(255,255,255,.35);"><div style="position:absolute;left:9px;top:7px;width:9px;height:3px;border:1px solid #5c6476;border-radius:1px;background:#f0f0f0"></div></div>
<div style="position:absolute;left:330px;top:5px;width:30px;height:16px;border-radius:3px;border:1px solid #8e9cb6;background:linear-gradient(#d3deec 0%,#cdd9e9 46%,#c0cfe2 50%,#cfdcec 100%);box-shadow:inset 0 0 0 1px rgba(255,255,255,.35);"><div style="position:absolute;left:9px;top:3px;width:9px;height:7px;border:1px solid #5c6476;border-radius:1px;background:#f0f0f0"><div style="position:absolute;left:2px;top:2px;width:3px;height:1px;border:1px solid #5c6476;background:#9ab5d4"></div></div></div>
<div style="position:absolute;left:364px;top:5px;width:30px;height:16px;border-radius:3px;border:1px solid #8e9cb6;background:linear-gradient(#d3deec 0%,#cdd9e9 46%,#c0cfe2 50%,#cfdcec 100%);box-shadow:inset 0 0 0 1px rgba(255,255,255,.35);"><svg style="position:absolute;left:9px;top:3px" width="12" height="10" viewBox="0 0 12 10"><path d="M0.6 0.6 L3.9 0.6 L5.6 2.7 L7.3 0.6 L10.6 0.6 L7.5 4.6 L10.6 8.6 L7.3 8.6 L5.6 6.5 L3.9 8.6 L0.6 8.6 L3.7 4.6 Z" fill="#f0f0f0" stroke="#5c6476" stroke-width="1" stroke-linejoin="round"/></svg></div>
<div style="position:absolute;left:4px;top:46px;width:394px;height:191px;box-sizing:border-box;border-top:1px solid #fff;border-left:1px solid #fff;border-right:1px solid #696969;border-bottom:1px solid #696969;"></div>
<div style="position:absolute;left:5px;top:47px;width:392px;height:189px;box-sizing:border-box;border-right:1px solid #a0a0a0;border-bottom:1px solid #a0a0a0;"></div>
<div style="position:absolute;left:5px;top:27px;width:44px;height:21px;box-sizing:border-box;background:#f0f0f0;border-top:1px solid #fff;border-left:1px solid #fff;border-right:2px solid #696969;"></div>
<div style="position:absolute;left:47px;top:28px;width:1px;height:20px;background:#a0a0a0"></div>
<span class="t" style="left:11.16px;top:29.4px;font-size:12.5px;transform:scaleX(0.874);color:#000;">Driver</span>
<div style="position:absolute;left:49px;top:29px;width:40px;height:17px;box-sizing:border-box;border-top:1px solid #fff;border-left:1px solid #fff;border-right:2px solid #696969;"></div>
<div style="position:absolute;left:87px;top:30px;width:1px;height:16px;background:#a0a0a0"></div>
<span class="t" style="left:53.23px;top:31.4px;font-size:12.5px;transform:scaleX(0.85);color:#000;">Box</span>
<div style="position:absolute;left:89px;top:29px;width:42px;height:17px;box-sizing:border-box;border-top:1px solid #fff;border-left:1px solid #fff;border-right:2px solid #696969;"></div>
<div style="position:absolute;left:129px;top:30px;width:1px;height:16px;background:#a0a0a0"></div>
<span class="t" style="left:94.96px;top:31.4px;font-size:12.5px;transform:scaleX(0.877);color:#000;">Vents</span>
<div style="position:absolute;left:131px;top:29px;width:42px;height:17px;box-sizing:border-box;border-top:1px solid #fff;border-left:1px solid #fff;border-right:2px solid #696969;"></div>
<div style="position:absolute;left:171px;top:30px;width:1px;height:16px;background:#a0a0a0"></div>
<span class="t" style="left:137.2px;top:31.4px;font-size:12.5px;transform:scaleX(0.836);color:#000;">Plot</span>
<div style="position:absolute;left:173px;top:29px;width:42px;height:17px;box-sizing:border-box;border-top:1px solid #fff;border-left:1px solid #fff;border-right:2px solid #696969;"></div>
<div style="position:absolute;left:213px;top:30px;width:1px;height:16px;background:#a0a0a0"></div>
<span class="t" style="left:178.52px;top:31.4px;font-size:12.5px;transform:scaleX(0.856);color:#000;">Signal</span>
<div style="position:absolute;left:215px;top:29px;width:54px;height:17px;box-sizing:border-box;border-top:1px solid #fff;border-left:1px solid #fff;border-right:2px solid #696969;"></div>
<div style="position:absolute;left:267px;top:30px;width:1px;height:16px;background:#a0a0a0"></div>
<span class="t" style="left:221.46px;top:31.4px;font-size:12.5px;transform:scaleX(0.847);color:#000;">EQ/Filter</span>
<div style="position:absolute;left:269px;top:29px;width:45px;height:17px;box-sizing:border-box;border-top:1px solid #fff;border-left:1px solid #fff;border-right:2px solid #696969;"></div>
<div style="position:absolute;left:312px;top:30px;width:1px;height:16px;background:#a0a0a0"></div>
<span class="t" style="left:275.69px;top:31.4px;font-size:12.5px;transform:scaleX(0.839);color:#000;">Project</span>
<span class="t" style="left:11.26px;top:50.4px;font-size:12.5px;transform:scaleX(0.817);color:#000;">Brand:</span>
<span class="t" style="left:141.23px;top:50.4px;font-size:12.5px;transform:scaleX(0.842);color:#000;">Model number:</span>
<div style="position:absolute;left:12px;top:65px;width:126px;height:19px;box-sizing:border-box;border:1px solid #a59c86;background:#fff;"></div>
<div style="position:absolute;left:142px;top:65px;width:126px;height:19px;box-sizing:border-box;border:1px solid #a59c86;background:#fff;"></div>
<span class="t" style="left:144.46px;top:69.4px;font-size:12.5px;transform:scaleX(0.871);color:#000;">XX-21 (Yavem)</span>
<div style="position:absolute;left:284px;top:65px;width:26px;height:19px;box-sizing:border-box;background:#f0f0f0;border-top:1px solid #fff;border-left:1px solid #fff;border-right:1px solid #a0a0a0;border-bottom:1px solid #a0a0a0;"></div>
<svg style="position:absolute;left:291px;top:67px" width="9" height="14" viewBox="0 0 9 14"><path d="M0.5 2V12" stroke="#333" stroke-width="1" stroke-dasharray="3 1"/><rect x="2" y="2" width="1.2" height="10" fill="#000"/><path d="M3 3.6 L4.2 4.4 L8 0 L8 14 L4.2 9.6 L3 10.4 Z" fill="#000"/><rect x="6" y="3" width="1.2" height="1.2" fill="#ccc"/><rect x="6" y="9.6" width="1.2" height="1.2" fill="#ccc"/></svg>
<div style="position:absolute;left:12px;top:90px;width:124px;height:16px;box-sizing:border-box;background:#f0f0f0;border-top:1px solid #fff;border-left:1px solid #fff;border-right:1px solid #a0a0a0;border-bottom:1px solid #a0a0a0;"></div>
<span class="t c" style="left:-76px;width:300px;top:91.4px;font-size:12.5px;transform:scaleX(0.87);color:#000;">Placement</span>
<div style="position:absolute;left:148px;top:90px;width:124px;height:16px;box-sizing:border-box;background:#f0f0f0;border-top:1px solid #fff;border-left:1px solid #fff;border-right:1px solid #a0a0a0;border-bottom:1px solid #a0a0a0;"></div>
<span class="t c" style="left:60px;width:300px;top:91.4px;font-size:12.5px;transform:scaleX(0.887);color:#000;">Advanced options</span>
<span class="t" style="left:15.2px;top:106.4px;font-size:12.5px;transform:scaleX(0.841);color:#000;">Num. of drivers:</span>
<span class="t" style="left:152.96px;top:106.4px;font-size:12.5px;transform:scaleX(0.853);color:#000;">Voice coil temp rise:</span>
<div style="position:absolute;left:17px;top:120px;width:66px;height:21px;box-sizing:border-box;border:1px solid #a59c86;background:#fff;"></div>
<div style="position:absolute;left:70px;top:121px;width:12px;height:19px;background:#d9d5c0;border-left:1px solid #a59c86;box-sizing:border-box"></div>
<div style="position:absolute;left:73px;top:129px;width:0;height:0;border-left:3.5px solid transparent;border-right:3.5px solid transparent;border-top:4px solid #000"></div>
<span class="t" style="left:19.87px;top:123.4px;font-size:12.5px;transform:scaleX(0.83);color:#000;">1</span>
<div style="position:absolute;left:153px;top:120px;width:80px;height:19px;box-sizing:border-box;border:1px solid #a59c86;background:#fff;"></div>
<span class="t" style="left:156.55px;top:123.4px;font-size:12.5px;transform:scaleX(0.865);color:#000;">0,00</span>
<span class="t" style="left:237.24px;top:126.4px;font-size:12.5px;transform:scaleX(0.83);color:#000;">K</span>
<span class="t" style="left:152.96px;top:146.4px;font-size:12.5px;transform:scaleX(0.864);color:#000;">Voice coil resistance TC:</span>
<div style="position:absolute;left:153px;top:160px;width:80px;height:19px;box-sizing:border-box;border:1px solid #a59c86;background:#fff;"></div>
<span class="t" style="left:156.55px;top:163.4px;font-size:12.5px;transform:scaleX(0.869);color:#000;">0,0039000</span>
<span class="t" style="left:236.69px;top:166.4px;font-size:12.5px;transform:scaleX(0.966);color:#000;">1/K</span>
<span class="t" style="left:153.0px;top:185.4px;font-size:12.5px;transform:scaleX(0.862);color:#000;">Added mass to cone:</span>
<div style="position:absolute;left:153px;top:200px;width:80px;height:19px;box-sizing:border-box;border:1px solid #a59c86;background:#fff;"></div>
<span class="t" style="left:156.57px;top:203.4px;font-size:12.5px;transform:scaleX(0.83);color:#000;">0,0</span>
<span class="t" style="left:237.67px;top:206.4px;font-size:12.5px;transform:scaleX(0.83);color:#000;">g</span>
<div style="position:absolute;left:18px;top:148px;width:10px;height:10px;box-sizing:border-box;border:1px solid #a09884;border-radius:50%;background:#fff"></div>
<div style="position:absolute;left:21px;top:151px;width:4px;height:4px;border-radius:50%;background:#000"></div>
<span class="t" style="left:33.2px;top:146.4px;font-size:12.5px;transform:scaleX(0.84);color:#000;">Normal</span>
<div style="position:absolute;left:18px;top:163px;width:10px;height:10px;box-sizing:border-box;border:1px solid #a09884;border-radius:50%;background:#fff"></div>
<span class="t" style="left:33.02px;top:161.4px;font-size:12.5px;transform:scaleX(0.842);color:#000;">IsoBarik (Compound)</span>
<div style="position:absolute;left:284px;top:89px;width:72px;height:96px;background:#fff;box-sizing:border-box;border-top:1px solid #a0a0a0;border-left:1px solid #a0a0a0"></div>
<div style="position:absolute;left:319px;top:90px;width:2px;height:95px;background:#000"></div>
<svg style="position:absolute;left:300px;top:113px" width="20" height="48" viewBox="0 0 20 48"><path d="M2.5 9 H6.5 Q8 9 8 10.5 V15.5 Q13 7 19 2.5 V46 Q13 42 8 34 V38.5 Q8 40 6.5 40 H2.5 Q1 40 1 38.5 V10.5 Q1 9 2.5 9 Z" fill="#000"/><path d="M14.6 13 L16.4 11.4 M14 24.3 L16 23.7 M14.6 34.6 L16.4 36.4" stroke="#ddd" stroke-width="1.3" stroke-linecap="round"/></svg>
<div style="position:absolute;left:3px;top:237px;width:395px;height:2px;background:#fff"></div>
<div style="position:absolute;left:3px;top:239px;width:1px;height:10px;background:#fff"></div>
<div style="position:absolute;left:157px;top:239px;width:1px;height:10px;background:#fff"></div>
<div style="position:absolute;left:158px;top:238px;width:1px;height:11px;background:#808080"></div>
<div style="position:absolute;left:159px;top:239px;width:238px;height:10px;background:#ff8000"></div>
<div style="position:absolute;left:397px;top:239px;width:1px;height:10px;background:#b4b4b4"></div>
<div style="position:absolute;left:3px;top:249px;width:395px;height:1px;background:#a0a0a0"></div>
<span class="pm" style="left:3px;top:239px;width:156px">Parameters</span>
</div>
<div style="position:absolute;left:682px;top:361px;width:401px;height:254px;background:#000;border-radius:7px 7px 0 0;overflow:hidden">
<div style="position:absolute;left:1px;top:1px;width:399px;height:252px;background:#fff;border-radius:6px 6px 0 0;overflow:hidden">
<div style="position:absolute;right:0;top:4px;width:1px;height:254px;background:#3fd0f2"></div>
<div style="position:absolute;left:0;bottom:0;width:401px;height:1px;background:#3fd0f2"></div>
<div style="position:absolute;left:1px;top:1px;width:397px;height:250px;background:linear-gradient(#9bb7d8 0px,#bad2ec 24px,#bad2ec 100%);border-radius:5px 5px 0 0"></div>
</div>
<div style="position:absolute;left:3px;top:26px;width:395px;height:225px;background:#f0f0f0"></div>
<div style="position:absolute;left:8px;top:7px;width:9px;height:13px;background:#000"><div style="position:absolute;left:1px;top:1px;width:4px;height:11px;background:repeating-conic-gradient(#fff 0 25%,#808080 0 50%) 0 0/2px 2px"></div><div style="position:absolute;left:5px;top:1px;width:2px;height:1px;background:#b0b0b0"></div><div style="position:absolute;left:5px;top:8px;width:2px;height:1px;background:#c8c8c8"></div><div style="position:absolute;left:4px;top:10px;width:3px;height:1px;background:#c8c8c8"></div><div style="position:absolute;left:4px;top:11px;width:1px;height:1px;background:#000"></div></div>
<span class="tt" style="left:25px;top:7.3px;color:#10102a;transform:scaleX(0.912)">[2]Vented : HKM XX-21 (gemessene TSP)</span>
<div style="position:absolute;left:296px;top:5px;width:30px;height:16px;border-radius:3px;border:1px solid #51637e;background:linear-gradient(#c3d5ea 0%,#bdd0e8 46%,#9ab5d4 50%,#b3cae6 100%);box-shadow:inset 0 0 0 1px rgba(255,255,255,.45);"><div style="position:absolute;left:9px;top:7px;width:9px;height:3px;border:1px solid #3f4656;border-radius:1px;background:#fff"></div></div>
<div style="position:absolute;left:330px;top:5px;width:30px;height:16px;border-radius:3px;border:1px solid #8aa0bf;background:linear-gradient(#c3d5ea 0%,#bdd0e8 46%,#9ab5d4 50%,#b3cae6 100%);box-shadow:inset 0 0 0 1px rgba(255,255,255,.45);"><div style="position:absolute;left:9px;top:3px;width:9px;height:7px;border:1px solid #3f4656;border-radius:1px;background:#fff"><div style="position:absolute;left:2px;top:2px;width:3px;height:1px;border:1px solid #3f4656;background:#9ab5d4"></div></div></div>
<div style="position:absolute;left:364px;top:5px;width:30px;height:16px;border-radius:3px;border:1px solid #431422;background:linear-gradient(#e9a99c 0%,#dc8572 48%,#c2452c 50%,#d4745c 100%);box-shadow:inset 0 0 0 1px rgba(255,255,255,.35);"><svg style="position:absolute;left:9px;top:3px" width="12" height="10" viewBox="0 0 12 10"><path d="M0.6 0.6 L3.9 0.6 L5.6 2.7 L7.3 0.6 L10.6 0.6 L7.5 4.6 L10.6 8.6 L7.3 8.6 L5.6 6.5 L3.9 8.6 L0.6 8.6 L3.7 4.6 Z" fill="#fff" stroke="#3f4656" stroke-width="1" stroke-linejoin="round"/></svg></div>
<div style="position:absolute;left:4px;top:46px;width:394px;height:191px;box-sizing:border-box;border-top:1px solid #fff;border-left:1px solid #fff;border-right:1px solid #696969;border-bottom:1px solid #696969;"></div>
<div style="position:absolute;left:5px;top:47px;width:392px;height:189px;box-sizing:border-box;border-right:1px solid #a0a0a0;border-bottom:1px solid #a0a0a0;"></div>
<div style="position:absolute;left:5px;top:27px;width:44px;height:21px;box-sizing:border-box;background:#f0f0f0;border-top:1px solid #fff;border-left:1px solid #fff;border-right:2px solid #696969;"></div>
<div style="position:absolute;left:47px;top:28px;width:1px;height:20px;background:#a0a0a0"></div>
<span class="t" style="left:11.16px;top:29.4px;font-size:12.5px;transform:scaleX(0.874);color:#000;">Driver</span>
<div style="position:absolute;left:6px;top:29px;width:40px;height:16px;box-sizing:border-box;border:1px dotted #000"></div>
<div style="position:absolute;left:49px;top:29px;width:40px;height:17px;box-sizing:border-box;border-top:1px solid #fff;border-left:1px solid #fff;border-right:2px solid #696969;"></div>
<div style="position:absolute;left:87px;top:30px;width:1px;height:16px;background:#a0a0a0"></div>
<span class="t" style="left:53.23px;top:31.4px;font-size:12.5px;transform:scaleX(0.85);color:#000;">Box</span>
<div style="position:absolute;left:89px;top:29px;width:42px;height:17px;box-sizing:border-box;border-top:1px solid #fff;border-left:1px solid #fff;border-right:2px solid #696969;"></div>
<div style="position:absolute;left:129px;top:30px;width:1px;height:16px;background:#a0a0a0"></div>
<span class="t" style="left:94.96px;top:31.4px;font-size:12.5px;transform:scaleX(0.877);color:#000;">Vents</span>
<div style="position:absolute;left:131px;top:29px;width:42px;height:17px;box-sizing:border-box;border-top:1px solid #fff;border-left:1px solid #fff;border-right:2px solid #696969;"></div>
<div style="position:absolute;left:171px;top:30px;width:1px;height:16px;background:#a0a0a0"></div>
<span class="t" style="left:137.2px;top:31.4px;font-size:12.5px;transform:scaleX(0.836);color:#000;">Plot</span>
<div style="position:absolute;left:173px;top:29px;width:42px;height:17px;box-sizing:border-box;border-top:1px solid #fff;border-left:1px solid #fff;border-right:2px solid #696969;"></div>
<div style="position:absolute;left:213px;top:30px;width:1px;height:16px;background:#a0a0a0"></div>
<span class="t" style="left:178.52px;top:31.4px;font-size:12.5px;transform:scaleX(0.856);color:#000;">Signal</span>
<div style="position:absolute;left:215px;top:29px;width:54px;height:17px;box-sizing:border-box;border-top:1px solid #fff;border-left:1px solid #fff;border-right:2px solid #696969;"></div>
<div style="position:absolute;left:267px;top:30px;width:1px;height:16px;background:#a0a0a0"></div>
<span class="t" style="left:221.46px;top:31.4px;font-size:12.5px;transform:scaleX(0.847);color:#000;">EQ/Filter</span>
<div style="position:absolute;left:269px;top:29px;width:45px;height:17px;box-sizing:border-box;border-top:1px solid #fff;border-left:1px solid #fff;border-right:2px solid #696969;"></div>
<div style="position:absolute;left:312px;top:30px;width:1px;height:16px;background:#a0a0a0"></div>
<span class="t" style="left:275.69px;top:31.4px;font-size:12.5px;transform:scaleX(0.839);color:#000;">Project</span>
<span class="t" style="left:11.26px;top:50.4px;font-size:12.5px;transform:scaleX(0.817);color:#000;">Brand:</span>
<span class="t" style="left:141.23px;top:50.4px;font-size:12.5px;transform:scaleX(0.842);color:#000;">Model number:</span>
<div style="position:absolute;left:12px;top:65px;width:126px;height:19px;box-sizing:border-box;border:1px solid #a59c86;background:#fff;"></div>
<div style="position:absolute;left:142px;top:65px;width:126px;height:19px;box-sizing:border-box;border:1px solid #a59c86;background:#fff;"></div>
<span class="t" style="left:144.46px;top:69.4px;font-size:12.5px;transform:scaleX(0.854);color:#000;">XX-21 (gemessene TSP)</span>
<div style="position:absolute;left:284px;top:65px;width:26px;height:19px;box-sizing:border-box;background:#f0f0f0;border-top:1px solid #fff;border-left:1px solid #fff;border-right:1px solid #a0a0a0;border-bottom:1px solid #a0a0a0;"></div>
<svg style="position:absolute;left:291px;top:67px" width="9" height="14" viewBox="0 0 9 14"><path d="M0.5 2V12" stroke="#333" stroke-width="1" stroke-dasharray="3 1"/><rect x="2" y="2" width="1.2" height="10" fill="#000"/><path d="M3 3.6 L4.2 4.4 L8 0 L8 14 L4.2 9.6 L3 10.4 Z" fill="#000"/><rect x="6" y="3" width="1.2" height="1.2" fill="#ccc"/><rect x="6" y="9.6" width="1.2" height="1.2" fill="#ccc"/></svg>
<div style="position:absolute;left:12px;top:90px;width:124px;height:16px;box-sizing:border-box;background:#f0f0f0;border-top:1px solid #fff;border-left:1px solid #fff;border-right:1px solid #a0a0a0;border-bottom:1px solid #a0a0a0;"></div>
<span class="t c" style="left:-76px;width:300px;top:91.4px;font-size:12.5px;transform:scaleX(0.87);color:#000;">Placement</span>
<div style="position:absolute;left:148px;top:90px;width:124px;height:16px;box-sizing:border-box;background:#f0f0f0;border-top:1px solid #fff;border-left:1px solid #fff;border-right:1px solid #a0a0a0;border-bottom:1px solid #a0a0a0;"></div>
<span class="t c" style="left:60px;width:300px;top:91.4px;font-size:12.5px;transform:scaleX(0.887);color:#000;">Advanced options</span>
<span class="t" style="left:15.2px;top:106.4px;font-size:12.5px;transform:scaleX(0.841);color:#000;">Num. of drivers:</span>
<span class="t" style="left:152.96px;top:106.4px;font-size:12.5px;transform:scaleX(0.853);color:#000;">Voice coil temp rise:</span>
<div style="position:absolute;left:17px;top:120px;width:66px;height:21px;box-sizing:border-box;border:1px solid #a59c86;background:#fff;"></div>
<div style="position:absolute;left:70px;top:121px;width:12px;height:19px;background:#d9d5c0;border-left:1px solid #a59c86;box-sizing:border-box"></div>
<div style="position:absolute;left:73px;top:129px;width:0;height:0;border-left:3.5px solid transparent;border-right:3.5px solid transparent;border-top:4px solid #000"></div>
<span class="t" style="left:19.87px;top:123.4px;font-size:12.5px;transform:scaleX(0.83);color:#000;">1</span>
<div style="position:absolute;left:153px;top:120px;width:80px;height:19px;box-sizing:border-box;border:1px solid #a59c86;background:#fff;"></div>
<span class="t" style="left:156.55px;top:123.4px;font-size:12.5px;transform:scaleX(0.865);color:#000;">0,00</span>
<span class="t" style="left:237.24px;top:126.4px;font-size:12.5px;transform:scaleX(0.83);color:#000;">K</span>
<span class="t" style="left:152.96px;top:146.4px;font-size:12.5px;transform:scaleX(0.864);color:#000;">Voice coil resistance TC:</span>
<div style="position:absolute;left:153px;top:160px;width:80px;height:19px;box-sizing:border-box;border:1px solid #a59c86;background:#fff;"></div>
<span class="t" style="left:156.55px;top:163.4px;font-size:12.5px;transform:scaleX(0.869);color:#000;">0,0039000</span>
<span class="t" style="left:236.69px;top:166.4px;font-size:12.5px;transform:scaleX(0.966);color:#000;">1/K</span>
<span class="t" style="left:153.0px;top:185.4px;font-size:12.5px;transform:scaleX(0.862);color:#000;">Added mass to cone:</span>
<div style="position:absolute;left:153px;top:200px;width:80px;height:19px;box-sizing:border-box;border:1px solid #a59c86;background:#fff;"></div>
<span class="t" style="left:156.57px;top:203.4px;font-size:12.5px;transform:scaleX(0.83);color:#000;">0,0</span>
<span class="t" style="left:237.67px;top:206.4px;font-size:12.5px;transform:scaleX(0.83);color:#000;">g</span>
<div style="position:absolute;left:18px;top:148px;width:10px;height:10px;box-sizing:border-box;border:1px solid #a09884;border-radius:50%;background:#fff"></div>
<div style="position:absolute;left:21px;top:151px;width:4px;height:4px;border-radius:50%;background:#000"></div>
<span class="t" style="left:33.2px;top:146.4px;font-size:12.5px;transform:scaleX(0.84);color:#000;">Normal</span>
<div style="position:absolute;left:18px;top:163px;width:10px;height:10px;box-sizing:border-box;border:1px solid #a09884;border-radius:50%;background:#fff"></div>
<span class="t" style="left:33.02px;top:161.4px;font-size:12.5px;transform:scaleX(0.842);color:#000;">IsoBarik (Compound)</span>
<div style="position:absolute;left:284px;top:89px;width:72px;height:96px;background:#fff;box-sizing:border-box;border-top:1px solid #a0a0a0;border-left:1px solid #a0a0a0"></div>
<div style="position:absolute;left:319px;top:90px;width:2px;height:95px;background:#000"></div>
<svg style="position:absolute;left:300px;top:113px" width="20" height="48" viewBox="0 0 20 48"><path d="M2.5 9 H6.5 Q8 9 8 10.5 V15.5 Q13 7 19 2.5 V46 Q13 42 8 34 V38.5 Q8 40 6.5 40 H2.5 Q1 40 1 38.5 V10.5 Q1 9 2.5 9 Z" fill="#000"/><path d="M14.6 13 L16.4 11.4 M14 24.3 L16 23.7 M14.6 34.6 L16.4 36.4" stroke="#ddd" stroke-width="1.3" stroke-linecap="round"/></svg>
<div style="position:absolute;left:3px;top:237px;width:395px;height:2px;background:#fff"></div>
<div style="position:absolute;left:3px;top:239px;width:1px;height:10px;background:#fff"></div>
<div style="position:absolute;left:157px;top:239px;width:1px;height:10px;background:#fff"></div>
<div style="position:absolute;left:158px;top:238px;width:1px;height:11px;background:#808080"></div>
<div style="position:absolute;left:159px;top:239px;width:238px;height:10px;background:#0000ff"></div>
<div style="position:absolute;left:397px;top:239px;width:1px;height:10px;background:#b4b4b4"></div>
<div style="position:absolute;left:3px;top:249px;width:395px;height:1px;background:#a0a0a0"></div>
<span class="pm" style="left:3px;top:239px;width:156px">Parameters</span>
</div>
<div style="position:absolute;left:1347px;top:1px;width:1px;height:629px;background:#fff"></div>
<div style="position:absolute;left:1px;top:629px;width:1347px;height:1px;background:#fff"></div>
</div></body></html>
